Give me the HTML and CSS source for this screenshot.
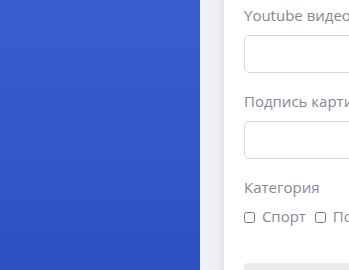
FILE: index.html
```html
<!DOCTYPE html>
<html lang="ru">
<head>
    <meta charset="UTF-8">
    <title>Новая запись</title>
    <link rel="stylesheet" href="styles.css">
</head>
<body>
    <div class="layout">
        <div class="side"></div>
        <div class="gap"></div>
        <div class="card">
            <label class="label" for="video">Youtube видео ссылка</label>
            <input class="field" type="text" id="video">

            <label class="label" for="caption">Подпись картинки</label>
            <input class="field" type="text" id="caption">

            <div class="label">Категория</div>
            <div class="cats">
                <label class="cat"><input type="checkbox"> Спорт</label>
                <label class="cat"><input type="checkbox"> Политика</label>
                <label class="cat"><input type="checkbox"> Культура</label>
            </div>

            <div class="submit"></div>
        </div>
    </div>
</body>
</html>
```

FILE: styles.css
```css
body {
    margin: 0;
    font-family: "Open Sans", "Noto Sans", sans-serif;
    background: #ffffff;
    overflow: hidden;
}

.layout {
    display: flex;
    height: 270px;
}

.side {
    flex: 0 0 200px;
    background: linear-gradient(180deg, #3a5dcf 0%, #2d51c2 100%);
}

.gap {
    flex: 0 0 24px;
    background: linear-gradient(90deg, #f3f4f8 0%, #eceef3 70%, #e4e5ec 100%);
}

.card {
    flex: 1;
    padding: 4px 0 0 20px;
    white-space: nowrap;
    min-width: 0;
    overflow: hidden;
}

.label {
    display: block;
    font-size: 15px;
    color: #858796;
    line-height: 22px;
}

.field {
    display: block;
    box-sizing: border-box;
    width: 300px;
    height: 38px;
    margin: 9px 0 17px;
    border: 1px solid #d8d9e6;
    border-radius: 5px;
    background: #fff;
}

.cats {
    display: flex;
    gap: 9px;
    margin-top: 8px;
    font-size: 15px;
    color: #858796;
}

.cat input {
    margin: 0 3px 0 0;
    width: 11px;
    height: 11px;
    vertical-align: -1px;
}

.submit {
    margin-top: 37px;
    width: 300px;
    height: 20px;
    background: #eaebef;
    border-radius: 4px;
}
```
